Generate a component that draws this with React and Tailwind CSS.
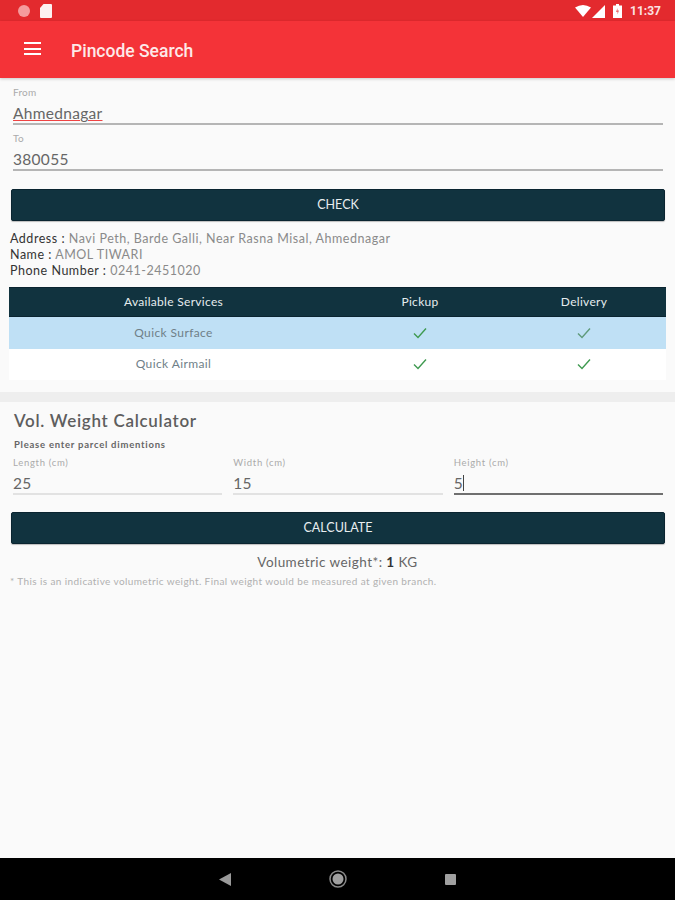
import React from "react";

function Check({ muted }) {
  return (
    <svg width="14" height="12" viewBox="0 0 14 12" fill="none">
      <path d="M1 6.5 L5 10.5 L13 1.5" stroke={muted ? "#5f9a7a" : "#3f9a50"} strokeWidth="1.4" />
    </svg>
  );
}

function Field({ label, value, underline = "border-[#b5b5b5]", caret, small }) {
  return (
    <div className="flex-1 min-w-0">
      <div className={`${small ? "text-[9.5px] h-[12px] leading-[12px] tracking-[0.7px]" : "text-[10px] h-[14px] leading-[14px] tracking-[0.2px]"} text-[#aaaaaa]`}>{label}</div>
      <div className={`h-[26px] pt-[4px] leading-[22px] text-[15.5px] text-[#666] tracking-[0.3px] border-b-2 ${underline} flex items-center`}>
        {value}
        {caret && <span className="inline-block w-px h-[16px] bg-[#444]" />}
      </div>
    </div>
  );
}

function Row({ name, bg, mutedLast }) {
  return (
    <div className={`flex h-[31.5px] items-center ${bg}`}>
      <div className="w-[329px] text-center text-[12px] text-[#6f7f88] tracking-[0.4px]">{name}</div>
      <div className="w-[164px] flex justify-center"><Check /></div>
      <div className="flex-1 flex justify-center"><Check muted={mutedLast} /></div>
    </div>
  );
}

export default function App() {
  return (
    <div className="w-[675px] h-[900px] flex flex-col bg-[#fafafa] overflow-hidden font-['Lato','Noto_Sans',sans-serif]">
      <div className="h-[21px] bg-[#e32a2e] flex items-center justify-between pl-[18px] pr-[14px] pt-[1px]">
        <div className="flex items-center gap-[10px]">
          <span className="w-[12px] h-[12px] rounded-full bg-[#f59a9c]" />
          <svg width="12" height="14" viewBox="0 0 12 14"><path d="M3.5 0H11a1 1 0 0 1 1 1v12a1 1 0 0 1-1 1H1a1 1 0 0 1-1-1V4Z" fill="#fdf1f1" /></svg>
        </div>
        <div className="flex items-center">
          <svg width="16" height="12" viewBox="0 0 16 12"><path d="M0 2.5 Q8 -2.5 16 2.5 L8 12Z" fill="#fff" /></svg>
          <svg width="13" height="13" viewBox="0 0 13 13" className="ml-[1px]"><path d="M13 0V13H0Z" fill="#fff" /></svg>
          <svg width="9" height="14" viewBox="0 0 9 14" className="ml-[8px]"><path d="M3 0H6V1.5H9V14H0V1.5H3Z" fill="#fff" /><path d="M4.5 4 3 8H4.5V10.5L6 6.5H4.5Z" fill="#e9676a" /></svg>
          <span className="ml-[8px] text-[12px] font-bold text-[#fbe3e3] font-['Roboto',sans-serif]">11:37</span>
        </div>
      </div>

      <div className="h-[57px] bg-[#f43338] flex items-center pl-[24px] shadow-[0_1px_3px_rgba(0,0,0,0.2)] relative">
        <div className="flex flex-col gap-[3.5px] w-[17px] -mt-[2px]">
          <span className="h-[2px] bg-white" />
          <span className="h-[2px] bg-white" />
          <span className="h-[2px] bg-white" />
        </div>
        <div className="ml-[30px] pt-[3px] text-[17.5px] font-medium text-[#fde9e9] font-['Roboto',sans-serif]">Pincode Search</div>
      </div>

      <div className="pl-[13px] pr-[12px] pt-[7px]">
        <Field
          label="From"
          value={<span className="underline decoration-[#ef4444] underline-offset-[1px] decoration-1">Ahmednagar</span>}
        />
        <div className="mt-[6px]">
          <Field label="To" value="380055" />
        </div>
      </div>

      <button className="mt-[18px] mx-[11px] w-[654px] h-[32px] shrink-0 bg-[#11333f] border border-[#0a2430] rounded-[2px] text-[12.5px] text-[#e8eef0] shadow-[0_1px_1px_rgba(0,0,0,0.25)]">CHECK</button>

      <div className="mt-[10px] pl-[10px] text-[12.5px] leading-[16px] text-[#8a8a8a] tracking-[0.52px]">
        <div><span className="text-[#333]">Address :</span> Navi Peth, Barde Galli, Near Rasna Misal, Ahmednagar</div>
        <div><span className="text-[#333]">Name :</span> AMOL TIWARI</div>
        <div><span className="text-[#333]">Phone Number :</span> 0241-2451020</div>
      </div>

      <div className="mt-[8px] ml-[9px] w-[657px]">
        <div className="flex h-[30px] items-center bg-[#11333f] border-y border-[#0a2430] text-[12px] text-[#e6ecee] tracking-[0.3px]">
          <div className="w-[329px] text-center">Available Services</div>
          <div className="w-[164px] text-center">Pickup</div>
          <div className="flex-1 text-center">Delivery</div>
        </div>
        <Row name="Quick Surface" bg="bg-[#bfe0f5]" mutedLast />
        <Row name="Quick Airmail" bg="bg-white" />
      </div>

      <div className="mt-[12px] h-[10px] shrink-0 bg-[#eeeeee]" />

      <div className="mt-[9px] pl-[14px] text-[17px] font-semibold leading-[20px] text-[#5e5e5e] tracking-[0.7px]">Vol. Weight Calculator</div>
      <div className="mt-[8px] pl-[14px] text-[9.5px] font-bold leading-[12px] text-[#666] tracking-[0.75px]">Please enter parcel dimentions</div>

      <div className="mt-[6px] pl-[13px] pr-[12px] flex gap-[11px]">
        <Field small label="Length (cm)" value="25" underline="border-[#e2e2e2]" />
        <Field small label="Width (cm)" value="15" underline="border-[#e2e2e2]" />
        <Field small label="Height (cm)" value="5" underline="border-[#6f6f6f]" caret />
      </div>

      <button className="mt-[17px] mx-[11px] w-[654px] h-[32px] shrink-0 bg-[#11333f] border border-[#0a2430] rounded-[2px] text-[12.5px] text-[#e8eef0] shadow-[0_1px_1px_rgba(0,0,0,0.25)]">CALCULATE</button>

      <div className="mt-[9px] text-center text-[13.5px] leading-[18px] text-[#666] tracking-[0.45px]">
        Volumetric weight*: <span className="font-bold text-[#333]">1</span> KG
      </div>
      <div className="mt-[4px] pl-[10px] text-[10px] leading-[13px] text-[#b0b0b0] tracking-[0.4px]">* This is an indicative volumetric weight. Final weight would be measured at given branch.</div>

      <div className="flex-1" />

      <div className="h-[42px] shrink-0 bg-black flex items-center justify-center relative">
        <div className="flex items-center gap-[98px]">
          <svg width="12" height="13" viewBox="0 0 12 13"><path d="M12 0V13L0 6.5Z" fill="#9a9a9a" /></svg>
          <svg width="18" height="18" viewBox="0 0 18 18"><circle cx="9" cy="9" r="8" fill="none" stroke="#8a8a8a" strokeWidth="1.5" /><circle cx="9" cy="9" r="5.5" fill="#a0a0a0" /></svg>
          <span className="w-[11px] h-[11px] bg-[#a0a0a0] rounded-[1px]" />
        </div>
      </div>
    </div>
  );
}
